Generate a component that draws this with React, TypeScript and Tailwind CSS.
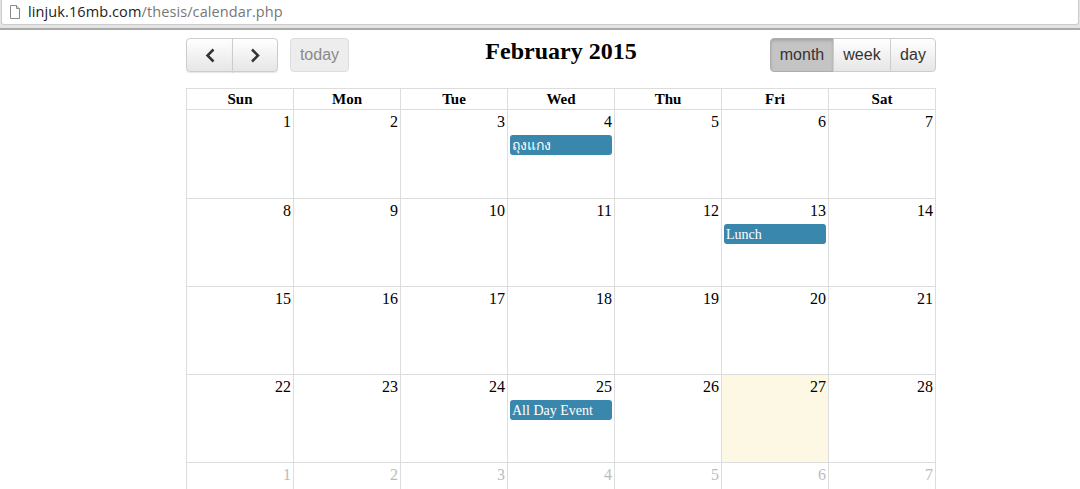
import React from "react";

type Ev = { title: string };

const days = ["Sun", "Mon", "Tue", "Wed", "Thu", "Fri", "Sat"];

const events: Record<number, Ev> = {
  4: { title: "ถุงแกง" },
  13: { title: "Lunch" },
  25: { title: "All Day Event" },
};

function FileIcon() {
  return (
    <svg width="12" height="16" viewBox="0 0 12 16" fill="none">
      <path d="M1.5 1.5H7.5L10.5 4.5V14.5H1.5Z" fill="#fff" stroke="#8a8a8a" />
      <path d="M7.5 1.5V4.5H10.5" fill="#ddd" stroke="#8a8a8a" />
    </svg>
  );
}

function Chevron({ left }: { left?: boolean }) {
  return (
    <svg width="12" height="16" viewBox="0 0 12 16" fill="none">
      <path
        d={left ? "M9.5 2.5L3.5 8.5L9.5 14.5" : "M3 2.5L9 8.5L3 14.5"}
        stroke="#333"
        strokeWidth="2.5"
      />
    </svg>
  );
}

function Cell({ n, muted, today, first }: { n: number; muted?: boolean; today?: boolean; first?: boolean }) {
  const ev = muted ? undefined : events[n];
  return (
    <div className={`${first ? "h-[89px]" : "h-[88px]"} border-r border-b border-[#ddd] ${today ? "bg-[#fcf8e3]" : ""}`}>
      <div className={`pr-[2px] text-right text-[16px] leading-[18px] pt-[3px] ${muted ? "text-[#bbb]" : "text-black"}`}>
        {n}
      </div>
      {ev && (
        <div className="mt-[4px] ml-[2px] mr-[2px] h-[20px] rounded-[3px] bg-[#3a87ad] pl-[2px] pt-px text-[14px] leading-[20px] text-white">
          {ev.title}
        </div>
      )}
    </div>
  );
}

export default function App() {
  const cells: { n: number; muted?: boolean }[] = [];
  for (let i = 1; i <= 28; i++) cells.push({ n: i });
  for (let i = 1; i <= 7; i++) cells.push({ n: i, muted: true });

  const btn = "h-[34px] border border-[#ccc] bg-gradient-to-b from-white to-[#e6e6e6] text-[16px] text-[#333] flex items-center justify-center";

  return (
    <div className="h-[489px] w-[1080px] overflow-hidden bg-white font-['Liberation_Serif',serif]">
      <div className="h-[30px] bg-[#e4e4e4] border-b-2 border-[#aaa] px-px">
        <div className="h-[25px] bg-white border-x border-b border-[#ccc] flex items-center pl-[7px] gap-[7px] font-['Open_Sans',sans-serif] text-[14.5px] tracking-[0.1px] rounded-b-[3px]">
          <FileIcon />
          <span>
            <span className="text-[#222]">linjuk.16mb.com</span>
            <span className="text-[#777]">/thesis/calendar.php</span>
          </span>
        </div>
      </div>

      <div className="w-[750px] ml-[186px] pt-[8px]">
        <div className="h-[34px] flex justify-between font-['Liberation_Sans',sans-serif]">
          <div className="flex-1 flex">
            <div className={`${btn} w-[47px] rounded-l-[4px] shadow-[0_1px_1px_rgba(0,0,0,0.1)]`}>
              <Chevron left />
            </div>
            <div className={`${btn} w-[46px] -ml-px rounded-r-[4px] shadow-[0_1px_1px_rgba(0,0,0,0.1)]`}>
              <Chevron />
            </div>
            <div className="ml-[12px] h-[34px] w-[59px] rounded-[4px] border border-[#ddd] bg-[#ededed] text-[16px] text-[#8a8a8a] flex items-center justify-center">
              today
            </div>
          </div>
          <div className="font-['Liberation_Serif',serif] font-bold text-[24px] leading-[26px] text-black">
            February 2015
          </div>
          <div className="flex-1 flex justify-end">
            <div className="h-[34px] w-[64px] rounded-l-[4px] border border-[#adadad] bg-[#c4c4c4] shadow-[inset_0_2px_3px_rgba(0,0,0,0.15)] text-[16px] text-[#333] flex items-center justify-center">
              month
            </div>
            <div className={`${btn} w-[58px] -ml-px`}>week</div>
            <div className={`${btn} w-[46px] -ml-px rounded-r-[4px]`}>day</div>
          </div>
        </div>

        <div className="mt-[16px] grid grid-cols-[repeat(7,107px)] border-t border-l border-[#ddd]">
          {days.map((d) => (
            <div
              key={d}
              className="h-[21px] border-r border-b border-[#ddd] text-center text-[15px] font-bold leading-[20px] text-black"
            >
              {d}
            </div>
          ))}
          {cells.map((c, i) => (
            <Cell key={i} n={c.n} muted={c.muted} first={i < 7} today={!c.muted && c.n === 27} />
          ))}
        </div>
      </div>
    </div>
  );
}
